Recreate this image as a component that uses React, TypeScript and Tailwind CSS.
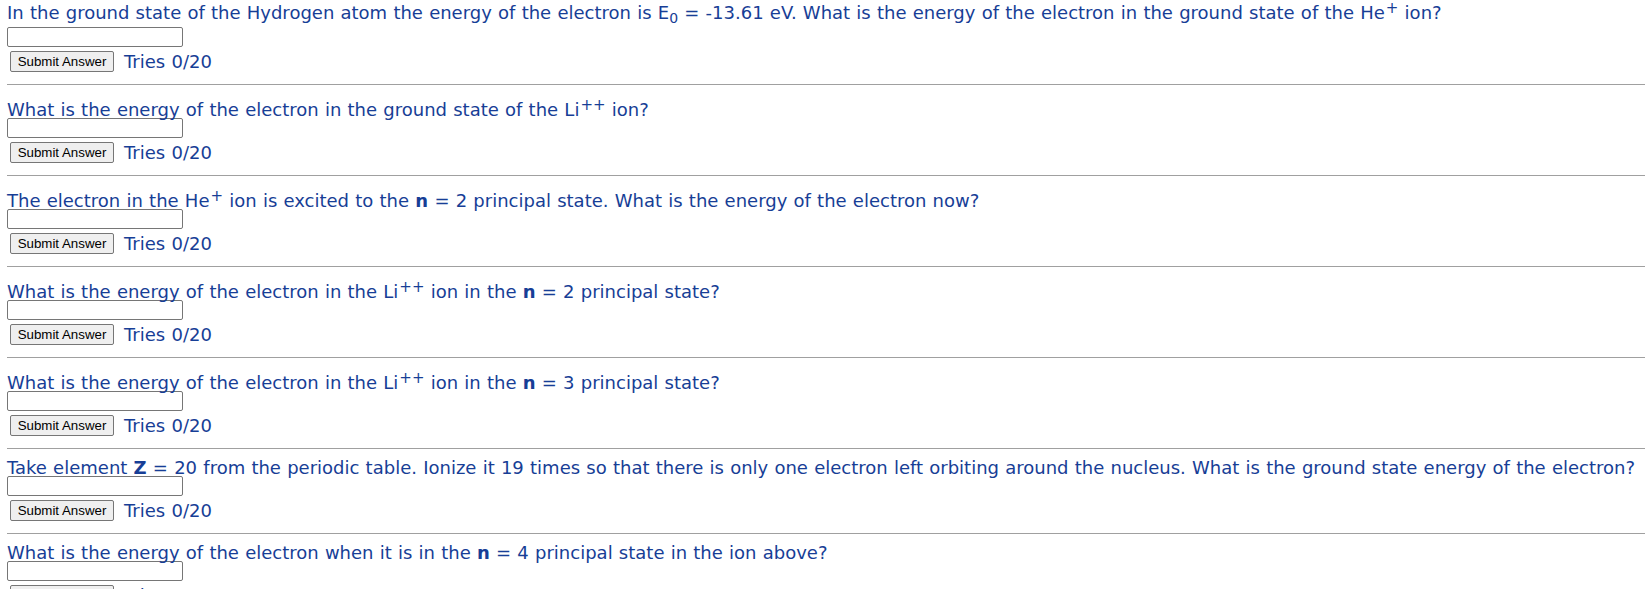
import React from "react";

const Sup = ({ children }: { children: React.ReactNode }) => (
  <sup className="relative -top-[6px] ml-[1px] align-baseline text-[15px] leading-none">{children}</sup>
);

function Controls() {
  return (
    <>
      <input
        type="text"
        className="block h-[20px] w-[176px] rounded-[2px] border border-[#767676] bg-white"
      />
      <div className="mt-[4px] flex h-[21px] items-center">
        <button
          type="button"
          className="ml-[3px] h-[21px] w-[104px] rounded-[2px] border border-[#767676] bg-[#efefef] text-[13.3px] leading-none text-black [word-spacing:0]"
          style={{ fontFamily: '"Liberation Sans", Arial, sans-serif' }}
        >
          Submit Answer
        </button>
        <span className="ml-[10px] leading-[18px]">Tries 0/20</span>
      </div>
    </>
  );
}

function Section({
  children,
  sup,
  first,
  last,
}: {
  children: React.ReactNode;
  sup?: boolean;
  first?: boolean;
  last?: boolean;
}) {
  const blockCls = first
    ? "h-[27px] pt-[4px] leading-[18px] whitespace-nowrap"
    : sup
    ? "h-[33px] pt-[16px] leading-[18px] whitespace-nowrap"
    : "h-[27px] pt-[10px] leading-[18px] whitespace-nowrap";
  return (
    <div>
      <div className={blockCls}>{children}</div>
      <Controls />
      {!last && <hr className="mt-[12px] border-t border-[#a0a0a0]" />}
    </div>
  );
}

export default function App() {
  return (
    <div
      className="min-h-[589px] overflow-hidden bg-white pl-[7px] pr-[1px] text-[18px] text-[#173e96] [word-spacing:0.5px]"
      style={{ fontFamily: '"DejaVu Sans", Verdana, sans-serif' }}
    >
      <Section first>
        In the ground state of the Hydrogen atom the energy of the electron is E
        <sub className="text-[14px]">0</sub> = -13.61 eV. What is the energy of the electron in the
        ground state of the He<Sup>+</Sup> ion?
      </Section>
      <Section sup>
        What is the energy of the electron in the ground state of the Li<Sup>++</Sup> ion?
      </Section>
      <Section sup>
        The electron in the He<Sup>+</Sup> ion is excited to the <b>n</b> = 2 principal state. What
        is the energy of the electron now?
      </Section>
      <Section sup>
        What is the energy of the electron in the Li<Sup>++</Sup> ion in the <b>n</b> = 2 principal
        state?
      </Section>
      <Section sup>
        What is the energy of the electron in the Li<Sup>++</Sup> ion in the <b>n</b> = 3 principal
        state?
      </Section>
      <Section>
        Take element <b>Z</b> = 20 from the periodic table. Ionize it 19 times so that there is only
        one electron left orbiting around the nucleus. What is the ground state energy of the
        electron?
      </Section>
      <Section last>
        What is the energy of the electron when it is in the <b>n</b> = 4 principal state in the ion
        above?
      </Section>
    </div>
  );
}
